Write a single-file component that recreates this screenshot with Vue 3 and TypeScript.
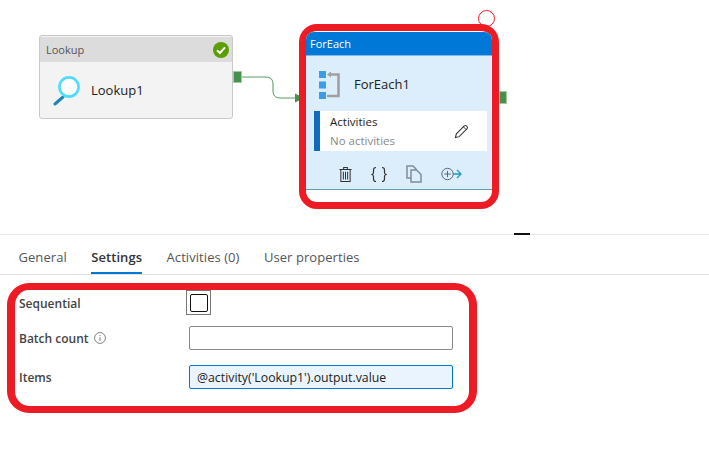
<script setup lang="ts">
const tabs: { label: string; active?: boolean }[] = [
  { label: 'General' },
  { label: 'Settings', active: true },
  { label: 'Activities (0)' },
  { label: 'User properties' },
]
</script>

<template>
  <div class="page">
    <section class="canvas">
      <svg class="wire" width="70" height="40" viewBox="0 0 70 40">
        <path d="M0 6H24Q31 6 31 13V20Q31 27 38 27H53" fill="none" stroke="#5a9e62" stroke-width="1" />
        <path d="M31 12V21" stroke="#a3c9a6" stroke-width="1.4" />
        <path d="M53 22.5L62 27L53 31.5Z" fill="#47914f" />
      </svg>

      <article class="lookup">
        <header class="lookup-head">
          <span>Lookup</span>
          <svg class="ok" width="16" height="16" viewBox="0 0 16 16">
            <circle cx="8" cy="8" r="8" fill="#5a9e00" />
            <path d="M4 8.3L6.9 11L12 5.4" fill="none" stroke="#fff" stroke-width="2" />
          </svg>
        </header>
        <div class="lookup-body">
          <svg width="32" height="32" viewBox="0 0 32 32">
            <path d="M10 23L2 30" stroke="#1e86b3" stroke-width="3" stroke-linecap="round" />
            <circle cx="16" cy="13" r="9.6" fill="#fff" stroke="#4fdcff" stroke-width="2.6" />
          </svg>
          <span class="lookup-name">Lookup1</span>
        </div>
      </article>
      <div class="port port-a"></div>

      <div class="rotate-handle"></div>
      <article class="foreach">
        <div class="fe-inner">
          <header class="fe-head">ForEach</header>
          <div class="fe-title">
            <svg class="fe-icon" width="22" height="28" viewBox="0 0 22 28">
              <rect x="0" y="0" width="7" height="7" fill="#3b9ce8" />
              <rect x="0" y="10.5" width="7" height="7" fill="#3b9ce8" />
              <rect x="0" y="21" width="7" height="7" fill="#3b9ce8" />
              <path d="M11 3.5H19.5V25H8" fill="none" stroke="#a0a0a0" stroke-width="2.6" />
              <path d="M8 3.5L12 0.5V6.5Z" fill="#a0a0a0" />
            </svg>
            <span>ForEach1</span>
          </div>
          <div class="fe-activities">
            <div class="fe-act-text">
              <span class="fe-act-label">Activities</span>
              <span class="fe-act-none">No activities</span>
            </div>
            <svg width="15" height="15" viewBox="0 0 16 16">
              <path d="M1.5 14.5L2.5 10.5L11 2Q12.3 1 13.6 2.2Q15 3.6 14 5L5.5 13.5Z" fill="none" stroke="#333" stroke-width="1.1" />
              <path d="M10 3L13 6" stroke="#333" stroke-width="1" />
            </svg>
          </div>
          <div class="fe-tools">
            <svg width="13" height="17" viewBox="0 0 14 17">
              <path d="M0.5 3H13.5M5 3V1H9V3M2 3V16H12V3M4.7 5.5V14M7 5.5V14M9.3 5.5V14" fill="none" stroke="#333" stroke-width="1.1" />
            </svg>
            <svg width="16" height="17" viewBox="0 0 16 17">
              <path d="M5 1.5Q2.5 1.5 2.5 4V6.5Q2.5 8 1 8.5Q2.5 9 2.5 10.5V13Q2.5 15.5 5 15.5M11 1.5Q13.5 1.5 13.5 4V6.5Q13.5 8 15 8.5Q13.5 9 13.5 10.5V13Q13.5 15.5 11 15.5" fill="none" stroke="#333" stroke-width="1.2" />
            </svg>
            <svg width="16" height="18" viewBox="0 0 16 18">
              <path d="M1 1H7L10 4V13H1Z" fill="#dcedfc" stroke="#7f8c94" stroke-width="1.5" />
              <path d="M5 5H10.5L15 9.5V17H5Z" fill="#dcedfc" stroke="#7f8c94" stroke-width="1.5" />
            </svg>
            <svg width="21" height="14" viewBox="0 0 21 14">
              <circle cx="6.5" cy="7" r="5.7" fill="none" stroke="#5b6670" stroke-width="1" />
              <path d="M6.5 3.8V10.2M3.3 7H9.7" stroke="#5b6670" stroke-width="1" />
              <path d="M12 7H20M16 3L20 7L16 11" fill="none" stroke="#1e9cc4" stroke-width="1.3" />
            </svg>
          </div>
        </div>
      </article>
      <div class="port port-b"></div>
      <div class="resize-mark"></div>
    </section>

    <nav class="tabs">
      <span v-for="tab in tabs" :key="tab.label" class="tab" :class="{ active: tab.active }">{{ tab.label }}</span>
    </nav>

    <form class="form" @submit.prevent>
      <label class="field-label seq">Sequential</label>
      <span class="check-focus"><span class="check"></span></span>

      <label class="field-label with-info">
        Batch count
        <svg width="12" height="12" viewBox="0 0 12 12">
          <circle cx="6" cy="6" r="5.4" fill="none" stroke="#777" stroke-width="0.9" />
          <path d="M6 5.2V9M6 3V4.1" stroke="#777" stroke-width="1" />
        </svg>
      </label>
      <input class="text-input" type="text" value="" />

      <label class="field-label">Items</label>
      <input class="text-input filled" type="text" value="@activity('Lookup1').output.value" />
    </form>
  </div>
</template>

<style scoped>
.page {
  width: 709px;
  height: 467px;
  overflow: hidden;
  background: #fff;
  font-family: "Open Sans", "Noto Sans", sans-serif;
  color: #333;
}

.canvas {
  position: relative;
  height: 234px;
  border-bottom: 1px solid #e6e6e6;
}

.wire {
  position: absolute;
  left: 242px;
  top: 71px;
}

.lookup {
  position: absolute;
  left: 39px;
  top: 35px;
  width: 192px;
  height: 82px;
  border: 1px solid #c8c8c8;
  border-radius: 3px;
  background: #f3f3f3;
}

.lookup-head {
  display: flex;
  align-items: center;
  justify-content: space-between;
  height: 25px;
  margin-top: 1px;
  padding: 0 3px 0 6px;
  background: #dcdcdc;
  font-size: 11px;
  color: #555;
}

.lookup-body {
  display: flex;
  align-items: center;
  gap: 6px;
  height: 55px;
  padding-left: 13px;
}

.lookup-name {
  font-size: 13px;
  color: #222;
}

.port {
  position: absolute;
  width: 9px;
  height: 12px;
  background: #47914f;
  border: 1px solid #a3c9a6;
  box-sizing: border-box;
}

.port-a {
  left: 233px;
  top: 71px;
}

.port-b {
  left: 499px;
  top: 91px;
  height: 13px;
  width: 8px;
}

.foreach {
  position: absolute;
  left: 299px;
  top: 24px;
  box-sizing: border-box;
  width: 200px;
  height: 185px;
  border: 7px solid #ed1c24;
  border-radius: 18px;
  background: #fff;
}

.fe-inner {
  margin-top: 1px;
  height: 157px;
  overflow: hidden;
  border-radius: 8px 8px 0 0;
  background: #dcedfc;
  border-bottom: 1px solid #5f9fb5;
}

.fe-head {
  height: 24px;
  line-height: 24px;
  padding-left: 4px;
  background: #0078d7;
  color: #fff;
  font-size: 11px;
  border-bottom: 1px solid #7bb8ea;
  box-sizing: border-box;
}

.fe-title {
  display: flex;
  align-items: center;
  gap: 13px;
  height: 55px;
  padding-left: 13px;
  font-size: 13px;
  color: #222;
}

.fe-icon {
  margin-top: 2px;
}

.fe-activities {
  display: flex;
  align-items: center;
  justify-content: space-between;
  box-sizing: border-box;
  height: 40px;
  margin: 0 5px 0 8px;
  padding-right: 18px;
  background: #fff;
  border-left: 6px solid #0f6cbd;
}

.fe-act-text {
  display: flex;
  flex-direction: column;
  padding-left: 10px;
  font-size: 11.5px;
  line-height: 19px;
}

.fe-act-label {
  color: #222;
}

.fe-act-none {
  color: #888;
}

.fe-tools {
  display: flex;
  align-items: center;
  gap: 19px;
  box-sizing: border-box;
  height: 38px;
  padding: 8px 0 0 33px;
}

.rotate-handle {
  position: absolute;
  left: 478px;
  top: 10px;
  box-sizing: border-box;
  width: 17px;
  height: 17px;
  border: 1px solid #ed1c24;
  border-radius: 50%;
  background: #fff;
}

.resize-mark {
  position: absolute;
  left: 514px;
  top: 233px;
  width: 16px;
  height: 2px;
  background: #111;
}

.tabs {
  display: flex;
  gap: 24.5px;
  height: 39px;
  padding-left: 18.5px;
  border-bottom: 1px solid #e1e1e1;
  font-size: 13px;
  letter-spacing: 0.06px;
  color: #555;
}

.tab {
  box-sizing: border-box;
  height: 39px;
  line-height: 44px;
}

.tab.active {
  font-weight: 600;
  color: #333;
  border-bottom: 2px solid #0078d4;
}

.form {
  display: grid;
  grid-template-columns: 170px 264px;
  grid-template-rows: 21px 24px 24px;
  row-gap: 15px;
  align-items: center;
  box-sizing: border-box;
  width: 470px;
  height: 130px;
  margin: 8px 0 0 7px;
  padding: 0 0 0 4px;
  border-style: solid;
  border-color: #ed1c24;
  border-width: 7px 8px;
  border-radius: 22px;
}

.field-label {
  font-size: 12px;
  font-weight: 600;
  color: #444;
}

.seq {
  margin-top: 5px;
}

.with-info {
  display: flex;
  align-items: center;
  gap: 5px;
}

.check-focus {
  display: flex;
  align-items: center;
  justify-content: center;
  align-self: start;
  box-sizing: border-box;
  width: 25px;
  height: 25px;
  margin-left: -3px;
  border: 1px solid #777;
}

.check {
  box-sizing: border-box;
  width: 18px;
  height: 18px;
  border: 1px solid #111;
  border-radius: 2px;
}

.text-input {
  box-sizing: border-box;
  width: 264px;
  height: 24px;
  padding: 0 7px;
  border: 1px solid #8a8a8a;
  border-radius: 2px;
  outline: none;
  background: #fff;
  font: 12.3px "Open Sans", "Noto Sans", sans-serif;
  color: #222;
}

.text-input.filled {
  border-color: #0078d4;
  background: #eaf4fe;
}
</style>
